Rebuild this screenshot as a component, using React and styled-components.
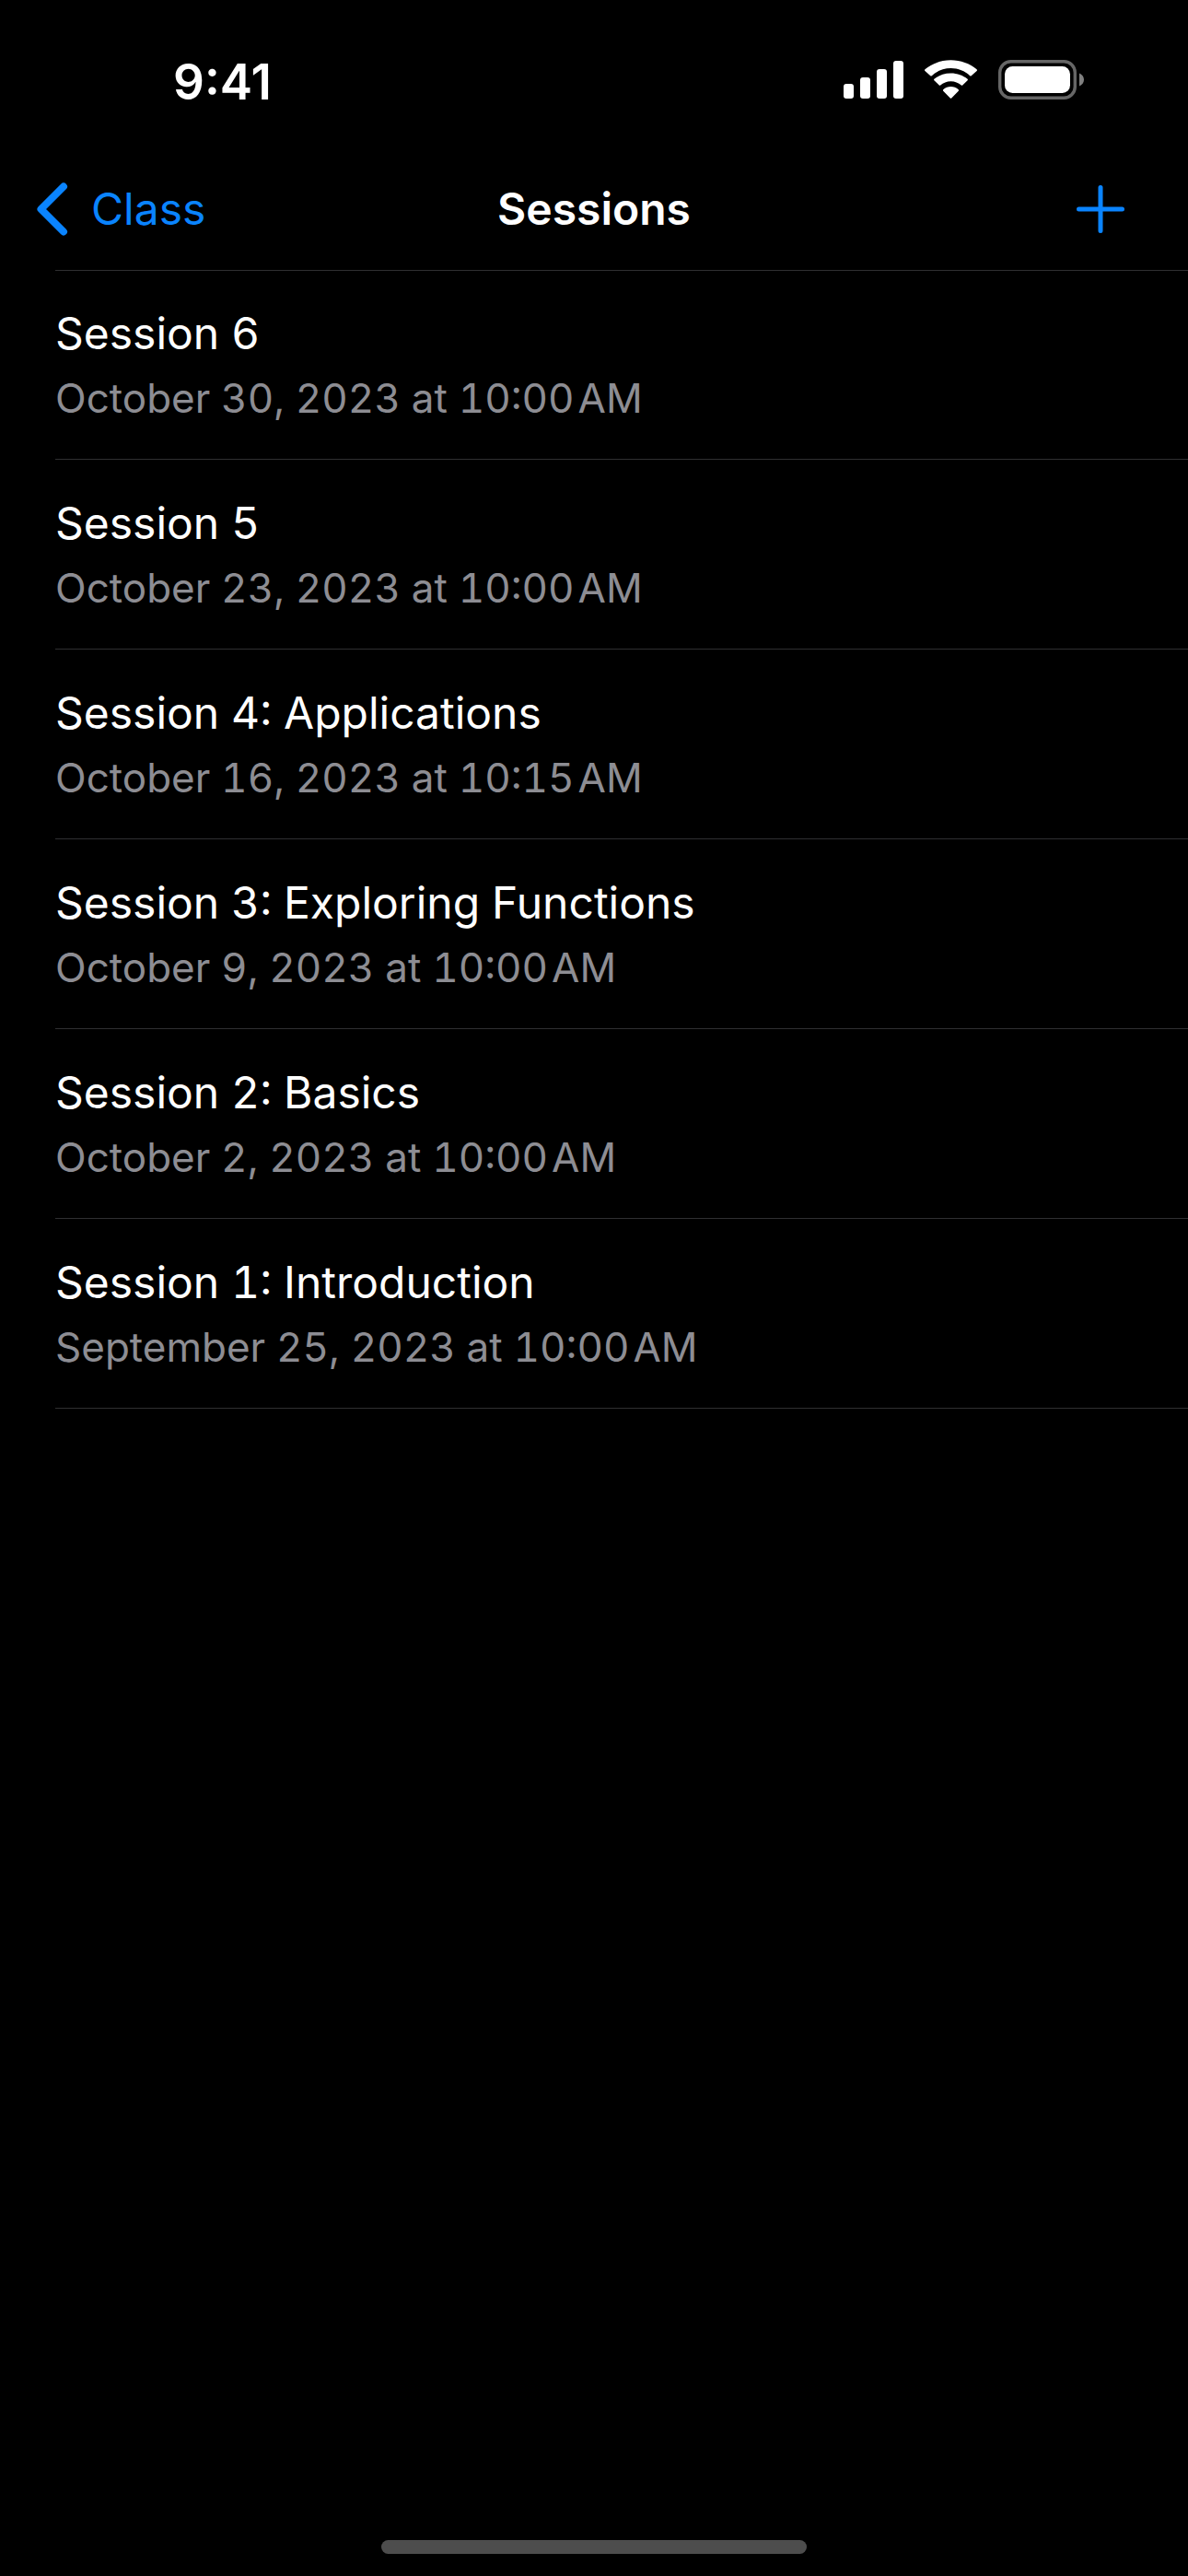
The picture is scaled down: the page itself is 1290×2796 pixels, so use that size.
import React from "react"
import styled, { createGlobalStyle } from "styled-components"

const GlobalStyle = createGlobalStyle`
  * {
    box-sizing: border-box;
  }

  body {
    margin: 0;
    background: #000;
    color: #fff;
    font-family: Inter, "Liberation Sans", sans-serif;
    font-variant-numeric: tabular-nums;
  }
`

const Screen = styled.div`
  display: flex;
  flex-direction: column;
  min-height: 100vh;
`

const StatusBar = styled.header`
  display: flex;
  justify-content: space-between;
  align-items: flex-start;
  padding: 65px 113px 48px 188px;
`

const Clock = styled.time`
  font-size: 53px;
  font-weight: 600;
  font-variant-numeric: normal;
  line-height: 48px;
`

const StatusIcons = styled.div`
  display: flex;
  align-items: flex-start;
  gap: 23px;

  svg {
    display: block;
  }
`

const NavBar = styled.nav`
  display: grid;
  grid-template-columns: 1fr auto 1fr;
  align-items: center;
  height: 132px;
  padding: 0 36px;
`

const BackLink = styled.a`
  display: flex;
  align-items: center;
  justify-self: start;
  gap: 21px;
  color: #0a84ff;
  font-size: 48px;
  line-height: 62px;
  text-decoration: none;
`

const NavTitle = styled.h1`
  margin: 0;
  font-size: 48px;
  font-weight: 600;
  line-height: 62px;
`

const AddButton = styled.button`
  display: flex;
  justify-self: end;
  padding: 8px 32px;
  border: 0;
  background: none;
  color: #0a84ff;
`

const SessionList = styled.ul`
  flex-grow: 1;
  margin: 0 0 0 60px;
  padding: 0;
  list-style: none;
  box-shadow: inset 0 1px #2f2f31;
`

const SessionLink = styled.a`
  display: flex;
  flex-direction: column;
  gap: 12px;
  padding: 38px 60px 40px 0;
  color: inherit;
  text-decoration: none;
  box-shadow: inset 0 -1px #2f2f31;
`

const SessionTitle = styled.span`
  font-size: 48px;
  line-height: 62px;
`

const SessionDate = styled.time`
  color: #8d8d93;
  font-size: 44px;
  line-height: 54px;
`

const HomeArea = styled.footer`
  display: flex;
  justify-content: center;
  padding: 24px;
`

const HomeIndicator = styled.div`
  width: 462px;
  height: 15px;
  border-radius: 8px;
  background: #4d4d4d;
`

const SignalIcon = () => (
  <svg width="65" height="43" viewBox="0 0 65 43" fill="currentColor" aria-hidden="true">
    <rect x="0" y="26" width="11" height="16" rx="3" />
    <rect x="18" y="19" width="11" height="23" rx="3" />
    <rect x="36" y="10" width="11" height="32" rx="3" />
    <rect x="54" y="1" width="11" height="41" rx="3" />
  </svg>
)

const WifiIcon = () => (
  <svg width="57" height="42" viewBox="0 0 57 42" fill="currentColor" aria-hidden="true">
    <path d="M28.5 9.100c7.900 0 15.200 3 20.700 8.200.4.4 1.100.4 1.500 0l5.900-5.300c.5-.5.5-1.200 0-1.700C49.100 4 39.100.300 28.500.300S7.900 4 .400 10.300c-.5.5-.5 1.200 0 1.700l5.900 5.300c.4.400 1.100.4 1.500 0C13.300 12.100 20.600 9.100 28.500 9.100z" />
    <path d="M28.500 23.200c4.300 0 8.300 1.600 11.300 4.300.4.400 1 .4 1.400 0l5.400-5.300c.4-.4.4-1.100 0-1.500C41.800 16.900 35.500 14.500 28.500 14.500s-13.300 2.400-18.100 6.200c-.4.400-.4 1.100 0 1.500l5.400 5.300c.4.400 1 .4 1.400 0 3-2.700 7-4.300 11.300-4.300z" />
    <path d="M36.800 33.800c.4-.4.400-1.100 0-1.500-4.700-4.400-11.900-4.400-16.600 0-.4.400-.4 1.100 0 1.500l7.600 7.600c.4.400 1 .4 1.400 0z" />
  </svg>
)

const BatteryIcon = () => (
  <svg width="93" height="43" viewBox="0 0 93 43" aria-hidden="true">
    <rect x="1.700" y="1.700" width="81.600" height="39.600" rx="12" fill="none" stroke="#666" strokeWidth="3.400" />
    <rect x="7" y="7" width="71" height="29" rx="8.500" fill="#fff" />
    <path d="M88 14.500v14c3-1.200 5-3.900 5-7s-2-5.800-5-7z" fill="#808080" />
  </svg>
)

const BackIcon = () => (
  <svg width="42" height="64" viewBox="0 0 42 64" fill="none" stroke="currentColor" strokeWidth="8" strokeLinecap="round" strokeLinejoin="round" aria-hidden="true">
    <path d="M33 7.500L8.500 32 33 56.500" />
  </svg>
)

const PlusIcon = () => (
  <svg width="54" height="54" viewBox="0 0 54 54" stroke="currentColor" strokeWidth="5" strokeLinecap="round" aria-hidden="true">
    <path d="M27 3.500v47M3.500 27h47" />
  </svg>
)

// \u200a keeps AM / PM tight against the time
const sessions = [
  { title: "Session 6", date: "October 30, 2023 at 10:00\u200aAM", iso: "2023-10-30T10:00" },
  { title: "Session 5", date: "October 23, 2023 at 10:00\u200aAM", iso: "2023-10-23T10:00" },
  { title: "Session 4: Applications", date: "October 16, 2023 at 10:15\u200aAM", iso: "2023-10-16T10:15" },
  { title: "Session 3: Exploring Functions", date: "October 9, 2023 at 10:00\u200aAM", iso: "2023-10-09T10:00" },
  { title: "Session 2: Basics", date: "October 2, 2023 at 10:00\u200aAM", iso: "2023-10-02T10:00" },
  { title: "Session 1: Introduction", date: "September 25, 2023 at 10:00\u200aAM", iso: "2023-09-25T10:00" },
]

const SessionItem = ({ title, date, iso }) => (
  <li>
    <SessionLink href="#">
      <SessionTitle>{title}</SessionTitle>
      <SessionDate dateTime={iso}>{date}</SessionDate>
    </SessionLink>
  </li>
)

const App = () => (
  <>
    <GlobalStyle />
    <Screen>
      <StatusBar>
        <Clock>9:41</Clock>
        <StatusIcons>
          <SignalIcon />
          <WifiIcon />
          <BatteryIcon />
        </StatusIcons>
      </StatusBar>
      <NavBar>
        <BackLink href="#">
          <BackIcon />
          Class
        </BackLink>
        <NavTitle>Sessions</NavTitle>
        <AddButton type="button" aria-label="Add session">
          <PlusIcon />
        </AddButton>
      </NavBar>
      <SessionList>
        {sessions.map(session => (
          <SessionItem key={session.iso} {...session} />
        ))}
      </SessionList>
      <HomeArea>
        <HomeIndicator />
      </HomeArea>
    </Screen>
  </>
)

export default App
